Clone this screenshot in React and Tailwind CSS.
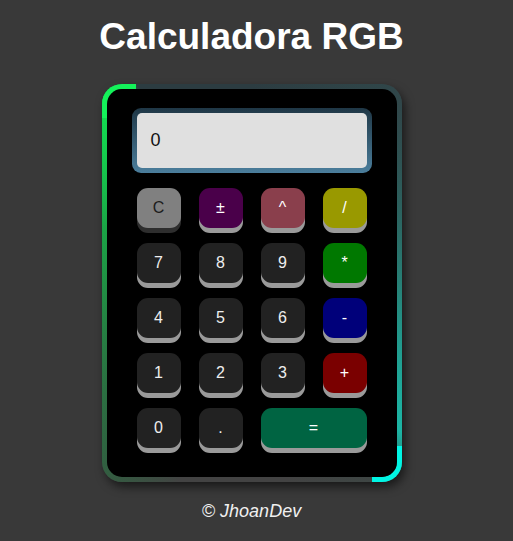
const keys = [
  { label: "C", face: "bg-[#808080] text-[#1c1c1c]", lip: "shadow-[0_5px_0_#2e2e2e]" },
  { label: "±", face: "bg-[#4a004a] text-white" },
  { label: "^", face: "bg-[#8a3f4c] text-white" },
  { label: "/", face: "bg-[#999900] text-white" },
  { label: "7" },
  { label: "8" },
  { label: "9" },
  { label: "*", face: "bg-[#007800] text-white" },
  { label: "4" },
  { label: "5" },
  { label: "6" },
  { label: "-", face: "bg-[#00007a] text-white" },
  { label: "1" },
  { label: "2" },
  { label: "3" },
  { label: "+", face: "bg-[#7a0000] text-white" },
  { label: "0" },
  { label: "." },
  { label: "=", face: "bg-[#006442] text-white", wide: true },
];

const Key = ({ label, face, lip, wide }) => {
  return (
    <button
      className={`h-[40px] rounded-[11px] text-[16px] flex items-center justify-center ${
        face || "bg-[#222222] text-[#eeeeee]"
      } ${lip || "shadow-[0_5px_0_#9a9a9a]"} ${wide ? "col-span-2" : ""}`}
    >
      {label}
    </button>
  );
};

const App = () => {
  return (
    <div className="min-h-screen bg-[#393939] pr-[10px] flex flex-col items-center font-['Liberation_Sans',Arial,sans-serif]">
      <h1 className="mt-[16px] text-[37px] leading-[42px] font-bold text-white">
        Calculadora RGB
      </h1>

      {/* Frame */}
      <div className="relative mt-[26px] w-[300px] rounded-[20px] p-[5px] bg-[conic-gradient(from_0deg,#2c3c41_0deg,#30474a_40deg,#278076_90deg,#1cb4a4_135deg,#3e4644_148deg,#434343_170deg,#434343_200deg,#2e6440_222deg,#1ba346_290deg,#12e052_322deg,#2c3c41_330deg)] shadow-[3px_5px_10px_rgba(0,0,0,0.55)]">
        <div className="absolute top-0 left-0 w-[34px] h-[34px] rounded-tl-[20px] border-t-[5px] border-l-[5px] border-[#14f25a]" />
        <div className="absolute bottom-0 right-0 w-[30px] h-[36px] rounded-br-[20px] border-b-[5px] border-r-[5px] border-[#00f5e4]" />

        <div className="relative bg-black rounded-[15px] pt-[19px] pb-[29px] flex flex-col items-center">
          {/* Display */}
          <div className="w-[240px] rounded-[9px] p-[5px] bg-[linear-gradient(to_bottom,#1f3746,#4b7e9c)]">
            <div className="h-[55px] rounded-[5px] bg-[#e0e0e0] flex items-center px-[14px] text-[18px] text-[#111]">
              0
            </div>
          </div>

          {/* Keys */}
          <div className="mt-[15px] w-[230px] grid grid-cols-4 gap-x-[18px] gap-y-[15px]">
            {keys.map((k) => (
              <Key key={k.label} {...k} />
            ))}
          </div>
        </div>
      </div>

      <p className="mt-[19px] text-[18px] leading-[21px] italic text-[#f0f0f0]">
        © JhoanDev
      </p>
    </div>
  );
};

export default App;
